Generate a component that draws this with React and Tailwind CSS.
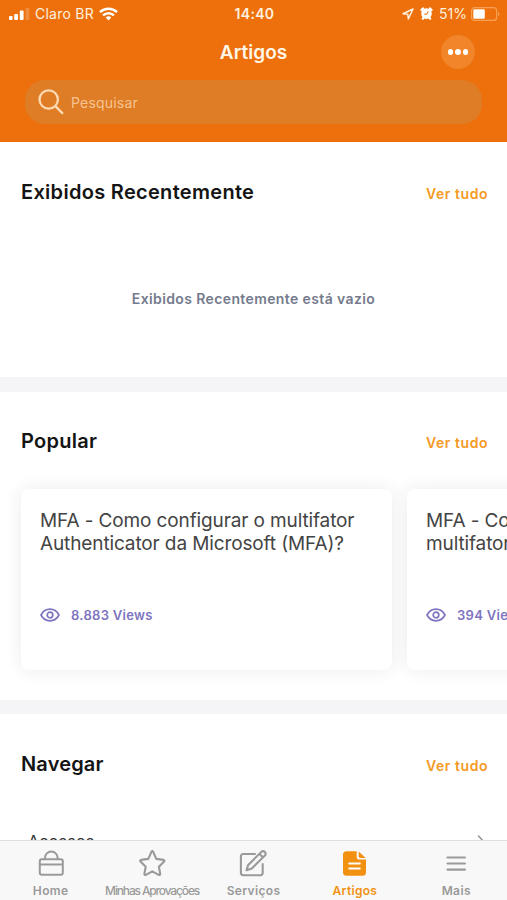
import clsx from 'clsx'

const articles = [
  { id: 1, lines: ['MFA - Como configurar o multifator', 'Authenticator da Microsoft (MFA)?'], views: '8.883' },
  { id: 2, lines: ['MFA - Como', 'multifator'], views: '394' },
]

const tabs = [
  { label: 'Home', icon: HomeIcon, text: 'tracking-[0.4px]' },
  { label: 'Minhas Aprovações', icon: StarIcon, text: 'tracking-[-1.15px]' },
  { label: 'Serviços', icon: EditIcon, text: 'tracking-[0.35px]' },
  { label: 'Artigos', icon: ArticleIcon, text: 'tracking-[0.3px]', active: true },
  { label: 'Mais', icon: MenuIcon, text: 'tracking-[0.4px]' },
]

function HomeIcon() {
  return (
    <svg width="26" height="28" viewBox="0 0 26 28" fill="none" stroke="currentColor" strokeWidth="2" strokeLinejoin="round">
      <rect x="1.8" y="9.3" width="23" height="15.4" rx="2" />
      <path d="M1.8 14.6h23M7 9.3V7.8a6.300 6.300 0 0 1 12.600 0v1.500" />
    </svg>
  )
}

function StarIcon() {
  return (
    <svg width="28" height="28" viewBox="0 0 28 28" fill="none" stroke="currentColor" strokeWidth="2.1" strokeLinejoin="round">
      <path d="M13.4 1.9q.9-1.5 1.8 0l3.100 7 7.300 1q1.500.4.5 1.600l-5.200 5.300 1.300 7q0 1.600-1.500 1l-6.400-3.500-6.400 3.500q-1.500.6-1.500-1l1.300-7-5.200-5.300q-1-1.200.5-1.600l7.300-1z" />
    </svg>
  )
}

function EditIcon() {
  return (
    <svg width="28" height="28" viewBox="0 0 28 28" fill="none" stroke="currentColor" strokeWidth="2.1" strokeLinejoin="round" strokeLinecap="round">
      <path d="M16 4H4.300a2.400 2.400 0 0 0-2.400 2.400v16.400a2.400 2.400 0 0 0 2.400 2.400h17a2.400 2.400 0 0 0 2.400-2.400v-8.800" />
      <path d="M22.300 1.900a2.500 2.500 0 0 1 3.600 0 2.500 2.500 0 0 1 0 3.600L12.800 18.500l-5.300 1.700 1.700-5.300zM20.500 4l3.300 3.300" />
    </svg>
  )
}

function ArticleIcon() {
  return (
    <svg width="24" height="28" viewBox="0 0 24 28">
      <path d="M3.500 1.200H13.700V6.800a2.800 2.800 0 0 0 2.800 2.800H23v12.700a3.500 3.500 0 0 1-3.500 3.500h-16A3.500 3.500 0 0 1 0 22.300V4.700a3.500 3.500 0 0 1 3.500-3.500z" fill="currentColor" />
      <path d="M15.700 1.400L22.700 7.900H17.300a1.600 1.600 0 0 1-1.600-1.600z" fill="currentColor" />
      <path d="M6.300 13.500h10.500M6.300 18.600h10.500" stroke="#fff" strokeWidth="2" strokeLinecap="round" />
    </svg>
  )
}

function MenuIcon() {
  return (
    <svg width="20" height="28" viewBox="0 0 20 28" stroke="currentColor" strokeWidth="2.2" strokeLinecap="round">
      <path d="M1.500 7.500h17.400M1.500 13.500h17.400M1.500 19.600h17.400" />
    </svg>
  )
}

function EyeIcon() {
  return (
    <svg width="20" height="14" viewBox="0 0 20 14" fill="none" stroke="currentColor" strokeWidth="1.7">
      <path d="M1 7C3 3.300 6.200 1.200 10 1.200S17 3.300 19 7C17 10.700 13.800 12.800 10 12.800S3 10.700 1 7z" strokeLinejoin="round" />
      <circle cx="10" cy="7" r="2.8" />
    </svg>
  )
}

function StatusBar() {
  return (
    <div className="grid h-[27px] grid-cols-3 items-center pr-[7px] pl-[9px] text-[14px] text-[#fff0df]">
      <div className="flex items-center">
        <svg width="21" height="14" viewBox="0 0 21 14" fill="#fff">
          <rect x="0" y="9" width="3.6" height="4" rx="1" />
          <rect x="5.200" y="7" width="3.8" height="6" rx="1" />
          <rect x="10.800" y="3.500" width="3.8" height="9.500" rx="1" />
          <rect x="16.500" y="1" width="3.8" height="12" rx="1" opacity=".2" />
        </svg>
        <span className="ml-[5px] tracking-[0.25px] whitespace-nowrap">Claro BR</span>
        <svg className="ml-[5px]" width="19" height="14" viewBox="0 0 19 14" fill="none" stroke="#fff" strokeWidth="2.4">
          <path d="M1 5.100a12.300 12.300 0 0 1 17 0M4 8.400a8 8 0 0 1 11 0" />
          <path d="M9.500 13.500l-2.800-2.900a4 4 0 0 1 5.600 0z" fill="#fff" stroke="none" />
        </svg>
      </div>
      <div className="text-center font-semibold tracking-[0.3px]">14:40</div>
      <div className="flex items-center justify-end">
        <svg width="12" height="12" viewBox="0 0 12 12" fill="none" stroke="currentColor" strokeWidth="1.500" strokeLinejoin="round">
          <path d="M11 1L1 5.700l4.800.5.500 4.800z" />
        </svg>
        <svg className="ml-[6px]" width="13" height="13" viewBox="0 0 13 13">
          <path d="M1.400 3L3.200 1.400M11.600 3L9.800 1.400M2.800 11.700l1-1.200M10.200 11.700l-1-1.200" stroke="#fff" strokeWidth="2.200" strokeLinecap="round" />
          <circle cx="6.500" cy="6.600" r="5.300" fill="#fff" />
          <path d="M6.500 7.200H4.200M6.500 7.200l1.900-2.700" stroke="#ed700c" strokeWidth="1.100" />
        </svg>
        <span className="ml-[6px]">51%</span>
        <svg className="ml-[4px]" width="29" height="14" viewBox="0 0 29 14">
          <rect x=".6" y=".6" width="25" height="12.800" rx="3" fill="none" stroke="#f5a052" strokeWidth="1.200" />
          <rect x="2.300" y="2.300" width="11.500" height="9.400" rx="1.300" fill="#fff" />
          <path d="M27 4.700a2.500 2.500 0 0 1 0 4.600z" fill="#f5a052" />
        </svg>
      </div>
    </div>
  )
}

function SectionHeader({ title, className }) {
  return (
    <div className="flex h-8 items-center justify-between pr-[19px] pl-[21px]">
      <h2 className={clsx('text-[20px] font-semibold text-[#141414]', className)}>{title}</h2>
      <a href="#" className="mt-[2px] text-[14px] font-semibold tracking-[0.55px] text-[#f49a25]">Ver tudo</a>
    </div>
  )
}

function ArticleCard({ article }) {
  return (
    <div className="h-[181px] w-[371px] shrink-0 rounded-[8px] bg-white px-[19px] pt-5 shadow-[0_0_18px_rgba(40,40,60,0.09)]">
      <h3 className="text-[19px] leading-[23px] tracking-[-0.12px] whitespace-nowrap text-[#444]">
        {article.lines[0]}<br />{article.lines[1]}
      </h3>
      <div className="mt-[50px] flex items-center text-[#7d74c0]">
        <EyeIcon />
        <span className="ml-[11px] text-[13px] leading-5 font-semibold tracking-[0.3px]">{article.views} Views</span>
      </div>
    </div>
  )
}

function App() {
  return (
    <div className="flex h-[900px] w-[507px] flex-col overflow-hidden bg-white font-[Inter,sans-serif]">
      <header className="h-[142px] shrink-0 bg-[#ed700c]">
        <StatusBar />
        <div className="mt-2 grid h-[34px] grid-cols-3 items-center">
          <h1 className="col-start-2 mt-[3px] text-center text-[19px] font-semibold text-[#fff7e8]">Artigos</h1>
          <button className="mr-8 flex size-[34px] items-center justify-center gap-[2px] justify-self-end rounded-full bg-[#f28529]">
            <span className="size-[5.5px] rounded-full bg-white" />
            <span className="size-[5.5px] rounded-full bg-white" />
            <span className="size-[5.5px] rounded-full bg-white" />
          </button>
        </div>
        <div className="mx-[25px] mt-[11px] flex h-[44px] items-center rounded-[20px] bg-[#de7d25] pl-[13px]">
          <svg width="26" height="26" viewBox="0 0 26 26" fill="none" stroke="#fdd9b2" strokeWidth="2.300" strokeLinecap="round">
            <circle cx="10.700" cy="10.500" r="9.200" />
            <path d="M17.600 17.400l6.700 6.700" />
          </svg>
          <span className="ml-[7px] text-[14px] tracking-[0.2px] text-[#f6c391]">Pesquisar</span>
        </div>
      </header>

      <main className="min-h-0 flex-1 overflow-hidden">
        <section className="h-[235px] pt-[34px]">
          <SectionHeader title="Exibidos Recentemente" className="tracking-[0.3px]" />
          <p className="mt-[81px] text-center text-[14px] leading-5 font-semibold tracking-[0.38px] text-[#757b8c]">Exibidos Recentemente está vazio</p>
        </section>
        <div className="h-[15px] bg-[#f5f5f7]" />
        <section className="h-[308px] pt-[33px]">
          <SectionHeader title="Popular" className="tracking-[0.25px]" />
          <div className="-mt-2 flex gap-[15px] overflow-hidden pt-10 pb-6 pl-[21px]">
            {articles.map((article) => <ArticleCard key={article.id} article={article} />)}
          </div>
        </section>
        <div className="h-[14px] bg-[#f5f5f7]" />
        <section className="pt-[34px]">
          <SectionHeader title="Navegar" className="tracking-[0.15px]" />
          <div className="mt-[52px] flex items-start justify-between pr-[20px] pl-[28px] text-[16px] leading-[19px] tracking-[0.3px] text-[#333]">
            <span>Acessos</span>
            <svg className="mt-[3px]" width="10" height="16" viewBox="0 0 10 16" fill="none" stroke="#999" strokeWidth="1.600" strokeLinecap="round">
              <path d="M1.500 1l6.500 7-6.500 7" />
            </svg>
          </div>
        </section>
      </main>

      <nav className="grid h-[60px] shrink-0 grid-cols-5 border-t border-[#dedede] bg-[#f8f8f8]">
        {tabs.map(({ label, icon: Icon, text, active }) => (
          <a key={label} href="#" className={clsx('flex flex-col items-center pt-[9px] font-semibold', active ? 'text-[#f29111]' : 'text-[#9a9a9a]')}>
            <Icon />
            <span className={clsx('mt-[5px] text-[12px] leading-4 whitespace-nowrap', text, label.length > 10 && 'font-medium')}>{label}</span>
          </a>
        ))}
      </nav>
    </div>
  )
}

export default App
